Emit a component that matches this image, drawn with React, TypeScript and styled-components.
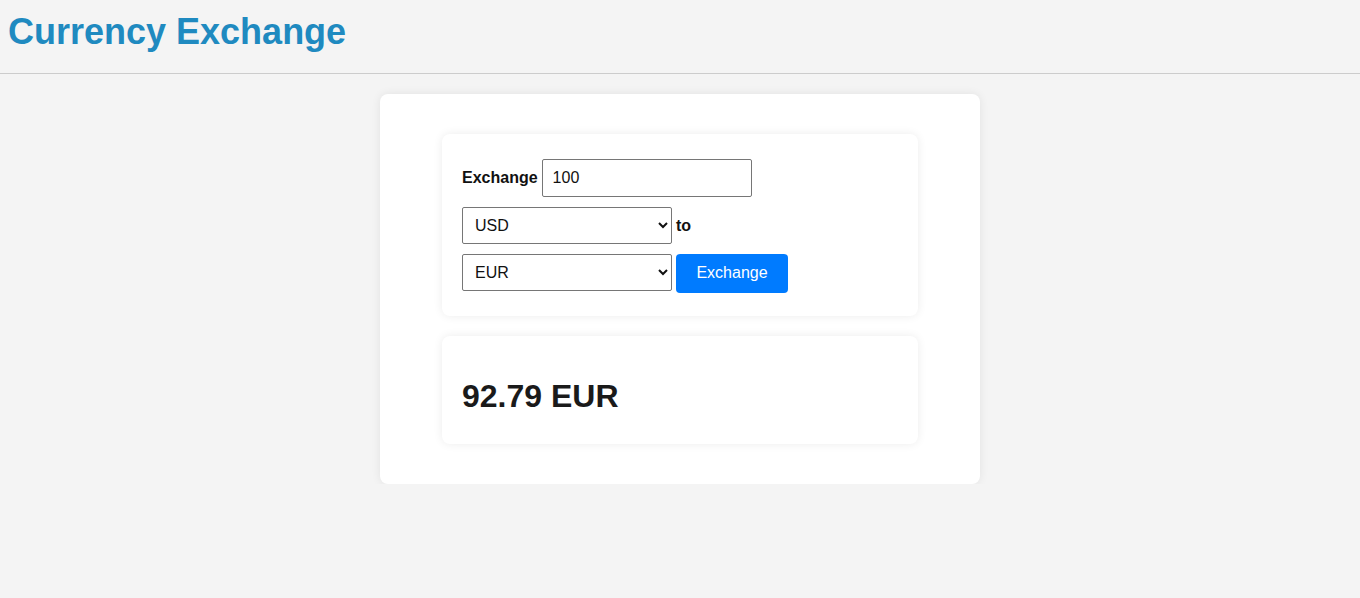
import React, { useState } from 'react';
import styled, { createGlobalStyle } from 'styled-components';

const GlobalStyle = createGlobalStyle`
  body {
    margin: 0;
    background: #f4f4f4;
    font-family: "Liberation Sans", Arial, sans-serif;
    color: #111;
  }
`;

const Header = styled.header`
  padding: 11px 8px 20px;
  border-bottom: 1px solid #cccccc;
`;

const Title = styled.h1`
  margin: 0;
  font-size: 36px;
  font-weight: 700;
  color: #1f8ac0;
`;

const Card = styled.main`
  width: 600px;
  box-sizing: border-box;
  margin: 20px auto 0;
  padding: 40px 62px;
  background: #fff;
  border-radius: 8px;
  box-shadow: 0 0 10px rgba(0, 0, 0, 0.08);
  display: flex;
  flex-direction: column;
  gap: 20px;
`;

const Panel = styled.section<{ $pad: string }>`
  background: #fff;
  border-radius: 8px;
  box-shadow: 0 0 10px rgba(0, 0, 0, 0.08);
  padding: ${(p) => p.$pad};
  display: flex;
  flex-direction: column;
  gap: 10px;
`;

const Row = styled.div<{ $align?: string }>`
  display: flex;
  align-items: ${(p) => p.$align ?? 'center'};
  gap: 4px;
`;

const Label = styled.label`
  font-size: 16px;
  font-weight: 700;
`;

const AmountInput = styled.input`
  width: 210px;
  height: 38px;
  box-sizing: border-box;
  padding: 0 10px;
  border: 1px solid #767676;
  border-radius: 2px;
  font: 16px "Liberation Sans", Arial, sans-serif;
  color: #111;
`;

const CurrencySelect = styled.select`
  width: 210px;
  height: 37px;
  box-sizing: border-box;
  padding: 0 8px;
  border: 1px solid #767676;
  border-radius: 2px;
  background: #fff;
  font: 16px "Liberation Sans", Arial, sans-serif;
  color: #111;
`;

const ExchangeButton = styled.button`
  width: 112px;
  height: 39px;
  padding: 0 0 2px;
  border: none;
  border-radius: 4px;
  background: #007bff;
  color: #fff;
  font: 16px "Liberation Sans", Arial, sans-serif;
  cursor: pointer;
`;

const Result = styled.h2`
  margin: 0;
  font-size: 32px;
  font-weight: 700;
  color: #1a1a1a;
`;

const currencies = ['USD', 'EUR', 'GBP', 'JPY', 'CHF'];

export default function App() {
  const [amount, setAmount] = useState('100');
  const [from, setFrom] = useState('USD');
  const [to, setTo] = useState('EUR');

  return (
    <>
      <GlobalStyle />
      <Header>
        <Title>Currency Exchange</Title>
      </Header>
      <Card>
        <Panel $pad="25px 20px 23px">
          <Row>
            <Label htmlFor="amount">Exchange</Label>
            <AmountInput id="amount" value={amount} onChange={(e) => setAmount(e.target.value)} />
          </Row>
          <Row>
            <CurrencySelect value={from} onChange={(e) => setFrom(e.target.value)}>
              {currencies.map((c) => (
                <option key={c}>{c}</option>
              ))}
            </CurrencySelect>
            <Label>to</Label>
          </Row>
          <Row $align="flex-start">
            <CurrencySelect value={to} onChange={(e) => setTo(e.target.value)}>
              {currencies.map((c) => (
                <option key={c}>{c}</option>
              ))}
            </CurrencySelect>
            <ExchangeButton>Exchange</ExchangeButton>
          </Row>
        </Panel>
        <Panel $pad="42px 20px 29px">
          <Result>92.79 EUR</Result>
        </Panel>
      </Card>
    </>
  );
}
